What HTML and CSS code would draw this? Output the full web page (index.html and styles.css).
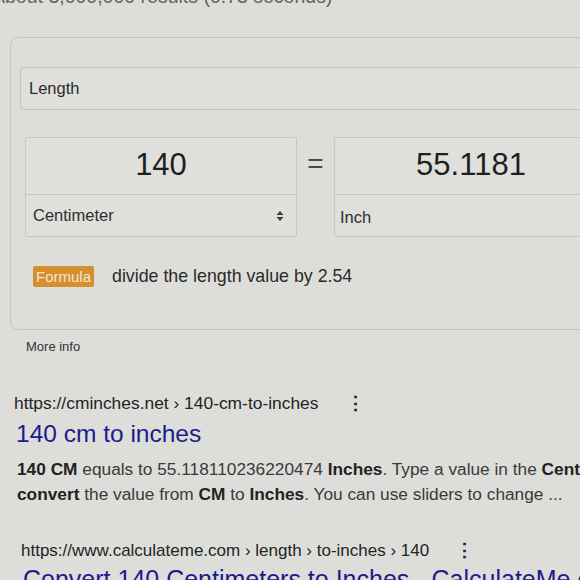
FILE: index.html
```html
<!DOCTYPE html>
<html lang="en">

<head>
  <meta charset="UTF-8">
  <meta name="viewport" content="width=device-width, initial-scale=1.0">
  <title>140 cm to inches - Search</title>
  <link rel="stylesheet" href="styles.css">
</head>

<body>
  <div class="stats">About 3,000,000 results (0.73 seconds)</div>

  <div class="card">
    <div class="measure">Length</div>

    <div class="convert">
      <div class="unit-box">
        <div class="value">140</div>
        <div class="unit">
          <span>Centimeter</span>
          <svg class="updown" width="8" height="12" viewBox="0 0 8 12">
            <path d="M4 1 L7.5 5 H0.5 Z M4 11 L7.5 7 H0.5 Z" fill="#3a3a3a" />
          </svg>
        </div>
      </div>
      <div class="equals">=</div>
      <div class="unit-box unit-box-right">
        <div class="value">55.1181</div>
        <div class="unit"><span>Inch</span></div>
      </div>
    </div>

    <div class="formula">
      <span class="badge">Formula</span>
      <span>divide the length value by 2.54</span>
    </div>
  </div>

  <div class="more">More info</div>

  <div class="result">
    <div class="cite">
      <span>https://cminches.net › 140-cm-to-inches</span>
      <span class="dots">⋮</span>
    </div>
    <a class="title" href="#">140 cm to inches</a>
    <p class="snippet"><b>140 CM</b> equals to 55.118110236220474 <b>Inches</b>. Type a value in the <b>Centimeter</b> field to<br><b>convert</b> the value from <b>CM</b> to <b>Inches</b>. You can use sliders to change ...</p>
  </div>

  <div class="result result2">
    <div class="cite">
      <span>https://www.calculateme.com › length › to-inches › 140</span>
      <span class="dots">⋮</span>
    </div>
    <a class="title" href="#">Convert 140 Centimeters to Inches - CalculateMe.com</a>
  </div>
</body>

</html>
```

FILE: styles.css
```css
body {
  margin: 0;
  width: 580px;
  height: 580px;
  overflow: hidden;
  background: #dddeda;
  font-family: "Liberation Sans", Arial, sans-serif;
  color: #262626;
}

/* only the bottom of the stats line shows at the top */
.stats {
  margin: -15px 0 0 -8px;
  height: 20px;
  font-size: 19.5px;
  color: #646562;
  white-space: nowrap;
}

/* the converter card runs off the right edge of the shot */
.card {
  width: 600px;
  margin: 32px 0 0 10px;
  padding: 29px 0 0 9px;
  height: 262px;
  border: 1px solid #c5c6c2;
  border-radius: 8px;
}

.measure {
  height: 41px;
  line-height: 40px;
  padding-left: 8px;
  border: 1px solid #c3c4c0;
  border-radius: 4px;
  font-size: 16.5px;
  color: #2b2b2b;
  background: #dfe0dc;
}

.convert {
  display: flex;
  margin: 27px 0 0 5px;
}

.unit-box {
  width: 270px;
  border: 1px solid #c6c7c3;
  border-radius: 2px;
  background: #dfe0dc;
}

.unit-box-right {
  width: 272px;
}

.value {
  height: 56px;
  line-height: 54px;
  text-align: center;
  font-size: 31px;
  color: #1f1f1f;
  border-bottom: 1px solid #c3c4c0;
}

.unit {
  display: flex;
  align-items: center;
  justify-content: space-between;
  height: 41px;
  padding: 0 12px 0 7px;
  font-size: 16.5px;
  color: #2e2e2e;
}

.unit-box-right .unit {
  padding: 3px 0 0 5px;
  height: 38px;
}

.equals {
  width: 37px;
  padding-top: 11px;
  text-align: center;
  font-size: 28px;
  color: #4a4a4a;
}

.formula {
  display: flex;
  align-items: center;
  gap: 18px;
  margin: 29px 0 0 13px;
  font-size: 17.8px;
  color: #2a2a2a;
}

.badge {
  padding: 2px 3px;
  border-radius: 2px;
  background: #d58f2c;
  color: #f3e6d2;
  font-size: 15px;
}

.more {
  margin: 9px 0 0 26px;
  font-size: 13px;
  color: #333;
}

.result {
  margin: 38px 0 0 14px;
}

.cite {
  display: flex;
  align-items: center;
  font-size: 17.4px;
  color: #242424;
  white-space: nowrap;
}

.dots {
  margin-left: 28px;
  font-size: 19px;
  font-weight: bold;
}

.title {
  display: block;
  margin: 5px 0 0 2px;
  font-size: 24.5px;
  color: #1c1b8e;
  text-decoration: none;
  white-space: nowrap;
}

.snippet {
  margin: 9px 0 0 3px;
  font-size: 17.3px;
  line-height: 25px;
  color: #3a3a3a;
  white-space: nowrap;
}

.snippet b {
  color: #222;
}

.result2 {
  margin: 32px 0 0 21px;
}

.result2 .cite {
  font-size: 17px;
}

.result2 .dots {
  margin-left: 26px;
}

.result2 .title {
  margin-top: 3px;
  font-size: 25px;
}
```
